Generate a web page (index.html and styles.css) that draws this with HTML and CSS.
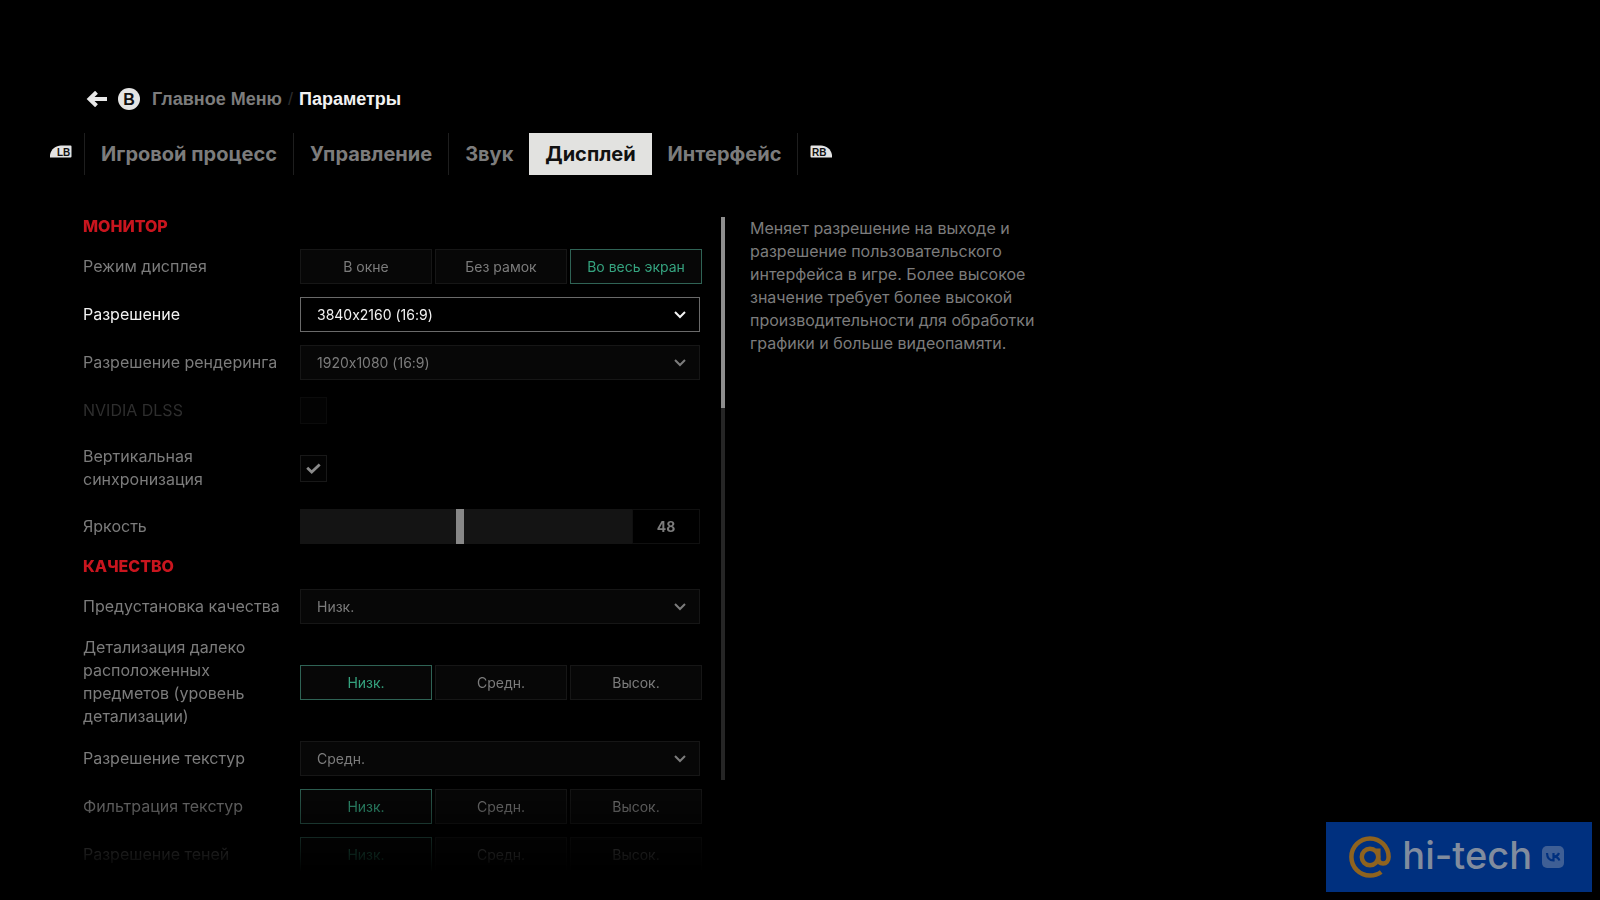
FILE: index.html
```html
<!DOCTYPE html>
<html lang="ru">
<head>
<meta charset="utf-8">
<title>Параметры</title>
<link rel="stylesheet" href="styles.css">
</head>
<body>
<div class="app">
  <header class="crumbs">
    <button class="back" type="button" aria-label="Назад">
      <svg width="22" height="16" viewBox="0 0 22 16"><path d="M21 8H4M10.500 1.200 3.500 8l7 6.800" fill="none" stroke="currentColor" stroke-width="4"/></svg>
    </button>
    <span class="pad-b">B</span>
    <a class="crumb" href="#">Главное Меню</a>
    <span class="slash">/</span>
    <span class="current">Параметры</span>
  </header>

  <nav class="tabs">
    <svg class="bumper" width="22" height="13" viewBox="0 0 22 13"><path d="M0 12.500V10C1 4 6 .5 11 .5h9.500Q21.500 .5 21.500 1.500V11.500q0 1-1 1z" fill="#e4e4e4"/><text class="bumper-text" x="7" y="10.500">LB</text></svg>
    <div class="tab-list">
      <a class="tab" href="#">Игровой процесс</a>
      <a class="tab" href="#">Управление</a>
      <a class="tab tab-last" href="#">Звук</a>
      <a class="tab tab-active" href="#">Дисплей</a>
      <a class="tab" href="#">Интерфейс</a>
    </div>
    <svg class="bumper" width="22" height="13" viewBox="0 0 22 13"><path d="M22 12.500V10C21 4 16 .5 11 .5H1.500Q.5 .5 .5 1.500V11.500q0 1 1 1z" fill="#e4e4e4"/><text class="bumper-text" x="2" y="10.500">RB</text></svg>
  </nav>

  <main class="content">
    <form class="settings">
      <h2 class="section">Монитор</h2>
      <div class="row">
        <span class="label">Режим дисплея</span>
        <div class="segments">
          <button type="button" class="seg">В окне</button>
          <button type="button" class="seg">Без рамок</button>
          <button type="button" class="seg seg-on">Во весь экран</button>
        </div>
      </div>
      <div class="row row-focus">
        <label class="label" for="resolution">Разрешение</label>
        <div class="select-box">
          <select id="resolution"><option>3840x2160 (16:9)</option></select>
          <svg class="chevron" width="12" height="8" viewBox="0 0 12 8"><path d="M1 1l5 5 5-5" fill="none" stroke="currentColor" stroke-width="2"/></svg>
        </div>
      </div>
      <div class="row">
        <label class="label" for="render">Разрешение рендеринга</label>
        <div class="select-box">
          <select id="render"><option>1920x1080 (16:9)</option></select>
          <svg class="chevron" width="12" height="8" viewBox="0 0 12 8"><path d="M1 1l5 5 5-5" fill="none" stroke="currentColor" stroke-width="2"/></svg>
        </div>
      </div>
      <div class="row row-off">
        <label class="label" for="dlss">NVIDIA DLSS</label>
        <div class="check-box"><input id="dlss" type="checkbox" disabled></div>
      </div>
      <div class="row row-tall">
        <label class="label" for="vsync">Вертикальная синхронизация</label>
        <div class="check-box">
          <input id="vsync" type="checkbox" checked>
          <svg class="tick" width="15" height="11" viewBox="0 0 15 11"><path d="M1.200 4.800l4.500 4.200 8-7.500" fill="none" stroke="currentColor" stroke-width="2.800"/></svg>
        </div>
      </div>
      <div class="row">
        <label class="label" for="brightness">Яркость</label>
        <div class="slider">
          <input id="brightness" type="range" min="0" max="100" value="48">
          <output class="value" for="brightness">48</output>
        </div>
      </div>
      <h2 class="section">Качество</h2>
      <div class="row">
        <label class="label" for="preset">Предустановка качества</label>
        <div class="select-box">
          <select id="preset"><option>Низк.</option></select>
          <svg class="chevron" width="12" height="8" viewBox="0 0 12 8"><path d="M1 1l5 5 5-5" fill="none" stroke="currentColor" stroke-width="2"/></svg>
        </div>
      </div>
      <div class="row">
        <span class="label">Детализация далеко расположенных предметов (уровень детализации)</span>
        <div class="segments">
          <button type="button" class="seg seg-on">Низк.</button>
          <button type="button" class="seg">Средн.</button>
          <button type="button" class="seg">Высок.</button>
        </div>
      </div>
      <div class="row">
        <label class="label" for="textures">Разрешение текстур</label>
        <div class="select-box">
          <select id="textures"><option>Средн.</option></select>
          <svg class="chevron" width="12" height="8" viewBox="0 0 12 8"><path d="M1 1l5 5 5-5" fill="none" stroke="currentColor" stroke-width="2"/></svg>
        </div>
      </div>
      <div class="row">
        <span class="label">Фильтрация текстур</span>
        <div class="segments">
          <button type="button" class="seg seg-on">Низк.</button>
          <button type="button" class="seg">Средн.</button>
          <button type="button" class="seg">Высок.</button>
        </div>
      </div>
      <div class="row">
        <span class="label">Разрешение теней</span>
        <div class="segments">
          <button type="button" class="seg seg-on">Низк.</button>
          <button type="button" class="seg">Средн.</button>
          <button type="button" class="seg">Высок.</button>
        </div>
      </div>
    </form>
    <div class="scrollbar"><div class="scroll-thumb"></div></div>
    <p class="description">Меняет разрешение на выходе и разрешение пользовательского интерфейса в игре. Более высокое значение требует более высокой производительности для обработки графики и больше видеопамяти.</p>
  </main>
</div>

<div class="watermark">
  <svg width="44" height="44" viewBox="0 0 44 44" fill="none" stroke="#8f631f" stroke-width="4.500"><circle cx="22" cy="22" r="8.200"/><path d="M30.300 13.500v9.500c0 3.500 1.700 5.500 4.800 5.500s5.500-2.500 5.500-6.500A18.600 18.600 0 1 0 22 40.600c4.500 0 8-1.200 11.200-3.600"/></svg>
  <span class="brand">hi-tech</span>
  <svg width="22" height="22" viewBox="0 0 22 22"><rect width="22" height="22" rx="5" fill="#3f5f95"/><path d="M5 7c.2 5 2.500 7.500 6.500 7.500V7M17 7c-1 2.300-3 3.700-5.300 3.700 3 0 4.800 1.300 5.700 3.800" fill="none" stroke="#00307f" stroke-width="2.200"/></svg>
</div>
</body>
</html>
```
FILE: styles.css
```css
* { box-sizing: border-box; }

body {
  margin: 0;
  background: #000;
  color: #7c7c7c;
  font-family: Inter, "Liberation Sans", sans-serif;
  font-feature-settings: "calt" 0;
  font-size: 16px;
  line-height: 23px;
}

a { color: inherit; text-decoration: none; }

.app {
  display: flex;
  flex-direction: column;
  height: 100vh;
  padding: 86px 50px 28px;
}

.crumbs {
  display: flex;
  align-items: center;
  height: 26px;
  padding-left: 36px;
  font-family: "Liberation Sans", Arial, sans-serif;
  font-size: 18px;
  font-weight: 700;
}

.back {
  display: flex;
  padding: 0;
  border: 0;
  background: none;
  color: #e8e8e8;
}

.pad-b {
  display: grid;
  place-items: center;
  width: 22px;
  height: 22px;
  margin: 0 12px 0 10px;
  border-radius: 50%;
  background: #e4e4e4;
  color: #111;
  font-size: 16px;
}

.slash { margin: 0 6px; color: #2c2c2c; font-weight: 400; }
.current { color: #f2f2f2; }

.tabs {
  display: flex;
  align-items: center;
  gap: 12px;
  margin-top: 21px;
}

.bumper { margin-bottom: 5px; }

.bumper-text {
  fill: #111;
  font-family: "Liberation Sans", Arial, sans-serif;
  font-size: 10px;
  font-weight: 700;
}

.tab-list { display: flex; border-left: 1px solid #1e1e1e; }

.tab {
  padding: 0 16px;
  border-right: 1px solid #1e1e1e;
  font-size: 20px;
  font-weight: 700;
  line-height: 42px;
}

.tab-last { border-right: 0; }
.tab-active { border-right: 0; background: #e2e2e0; color: #111; }

.content {
  display: flex;
  flex: 1;
  min-height: 0;
  margin-top: 35px;
  padding-left: 33px;
}

.settings {
  width: 620px;
  overflow: hidden;
  -webkit-mask-image: linear-gradient(to top, transparent, #000 90px);
  mask-image: linear-gradient(to top, transparent, #000 90px);
}

.section {
  margin: 0;
  color: #c9151e;
  font-size: 16px;
  font-weight: 800;
  line-height: 32px;
  text-transform: uppercase;
}

.row {
  display: grid;
  grid-template-columns: 200px 402px;
  column-gap: 17px;
  align-items: center;
  min-height: 48px;
  padding: 6px 0;
}

.row-tall { min-height: 68px; }
.row-focus { color: #f2f2f2; }
.row-off { color: #2e2e2e; }

.segments { display: grid; grid-template-columns: repeat(3, 1fr); gap: 3px; }

.seg, select {
  height: 35px;
  border: 1px solid #161616;
  border-radius: 0;
  background: #070707;
  color: #7c7c7c;
  font: inherit;
  font-size: 14px;
}

.seg-on { border-color: #2f6355; color: #35a37f; }

.select-box { position: relative; width: 400px; }

select {
  display: block;
  width: 100%;
  padding: 0 16px;
  appearance: none;
  font-feature-settings: "calt" 0;
}

.row-focus select { border-color: #6a6a6a; background: #000; color: #f2f2f2; }

.chevron { position: absolute; top: 14px; right: 14px; }

.check-box { position: relative; width: 27px; height: 27px; color: #8a8a8a; }

.check-box input {
  display: block;
  width: 27px;
  height: 27px;
  margin: 0;
  border: 1px solid #181818;
  background: #030303;
  appearance: none;
}

.row-off input { border-color: #0b0b0b; }

.tick { position: absolute; top: 8px; left: 6px; }

.slider { display: flex; width: 400px; height: 35px; }

.slider input {
  flex: 1;
  min-width: 0;
  height: 35px;
  margin: 0;
  background: #141414;
  appearance: none;
}

.slider input::-webkit-slider-thumb {
  width: 8px;
  height: 35px;
  background: #878787;
  appearance: none;
}

.value {
  width: 68px;
  border: 1px solid #101010;
  font-size: 14px;
  font-weight: 700;
  line-height: 33px;
  text-align: center;
}

.scrollbar {
  width: 4px;
  margin: 7px 25px 92px 18px;
  background: #262626;
}

.scroll-thumb { height: 34%; background: #8e8e8e; }

.description { width: 290px; margin: 7px 0 0; }

.watermark {
  position: fixed;
  right: 8px;
  bottom: 8px;
  display: flex;
  align-items: center;
  gap: 10px;
  height: 70px;
  padding: 0 28px 0 22px;
  background: #00307f;
}

.brand {
  padding-bottom: 4px;
  color: #818c9e;
  font-size: 38px;
  font-weight: 500;
  line-height: 44px;
}
```
